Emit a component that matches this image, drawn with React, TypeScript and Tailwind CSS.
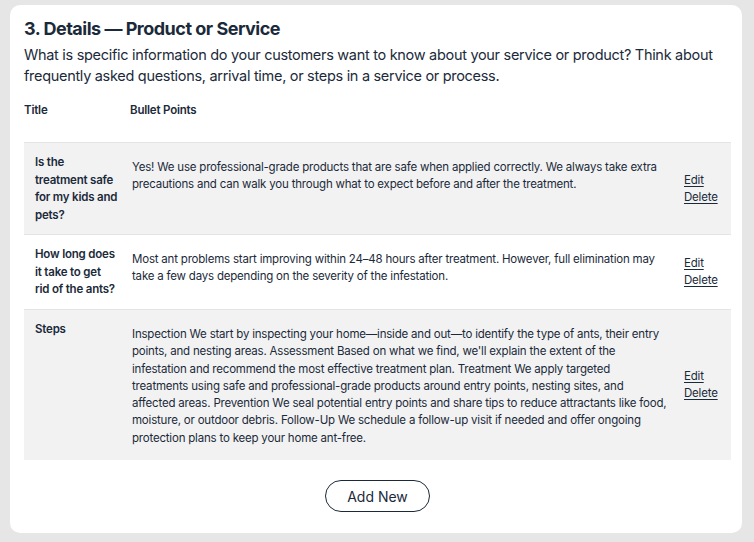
const rows = [
  {
    title: ["Is the", "treatment safe", "for my kids and", "pets?"],
    body: [
      "Yes! We use professional-grade products that are safe when applied correctly. We always take extra",
      "precautions and can walk you through what to expect before and after the treatment.",
    ],
    h: "h-[92px]",
    shade: true,
  },
  {
    title: ["How long does", "it take to get", "rid of the ants?"],
    body: [
      "Most ant problems start improving within 24–48 hours after treatment. However, full elimination may",
      "take a few days depending on the severity of the infestation.",
    ],
    h: "h-[75px]",
    shade: false,
  },
  {
    title: ["Steps"],
    body: [
      "Inspection We start by inspecting your home—inside and out—to identify the type of ants, their entry",
      "points, and nesting areas. Assessment Based on what we find, we'll explain the extent of the",
      "infestation and recommend the most effective treatment plan. Treatment We apply targeted",
      "treatments using safe and professional-grade products around entry points, nesting sites, and",
      "affected areas. Prevention We seal potential entry points and share tips to reduce attractants like food,",
      "moisture, or outdoor debris. Follow-Up We schedule a follow-up visit if needed and offer ongoing",
      "protection plans to keep your home ant-free.",
    ],
    h: "h-[151px]",
    shade: true,
  },
];

export default function App() {
  return (
    <div
      className="w-[754px] h-[542px] bg-[#e6e6e6] pt-[5px] pl-[10px] text-[#1b2a3a]"
      style={{ fontFamily: "Inter, 'Noto Sans', sans-serif" }}
    >
      <div className="w-[732px] h-[528px] bg-white rounded-[10px] pl-[14px] pt-[10px]">
        <h2 className="text-[18px] leading-[28px] font-bold tracking-[-0.5px]">
          3. Details — Product or Service
        </h2>
        <p className="mt-[1px] text-[14.5px] leading-[21px] tracking-[-0.3px] w-[712px]">
          What is specific information do your customers want to know about your service or product? Think about
          frequently asked questions, arrival time, or steps in a service or process.
        </p>

        <div className="w-[707px] mt-[13px] text-[11.5px] tracking-[-0.2px]">
          <div className="flex h-[43px] pt-[3px] font-semibold">
            <div className="w-[106px]">Title</div>
            <div>Bullet Points</div>
          </div>

          {rows.map((r) => (
            <div
              key={r.body[0]}
              className={`flex ${r.h} border-t border-[#e4e4e4] ${r.shade ? "bg-[#f2f2f2]" : "bg-white"}`}
            >
              <div className="w-[106px] shrink-0 pl-[11px] pt-[11px] font-semibold leading-[17.5px]">
                {r.title.map((l) => (
                  <div key={l}>{l}</div>
                ))}
              </div>
              <div className="w-[552px] shrink-0 pl-[2px] pr-[2px] pt-[16px] leading-[17.3px] whitespace-nowrap">
                {r.body.map((l) => (
                  <div key={l}>{l}</div>
                ))}
              </div>
              <div className="flex flex-col justify-center leading-[17px] pl-[2px]">
                <a className="underline underline-offset-2 w-fit">Edit</a>
                <a className="underline underline-offset-2 w-fit">Delete</a>
              </div>
            </div>
          ))}

          <div className="flex justify-center pt-[20px] tracking-normal">
            <button className="w-[105px] h-[32px] rounded-full border border-[#1b2a3a] text-[14px]">
              Add New
            </button>
          </div>
        </div>
      </div>
    </div>
  );
}
